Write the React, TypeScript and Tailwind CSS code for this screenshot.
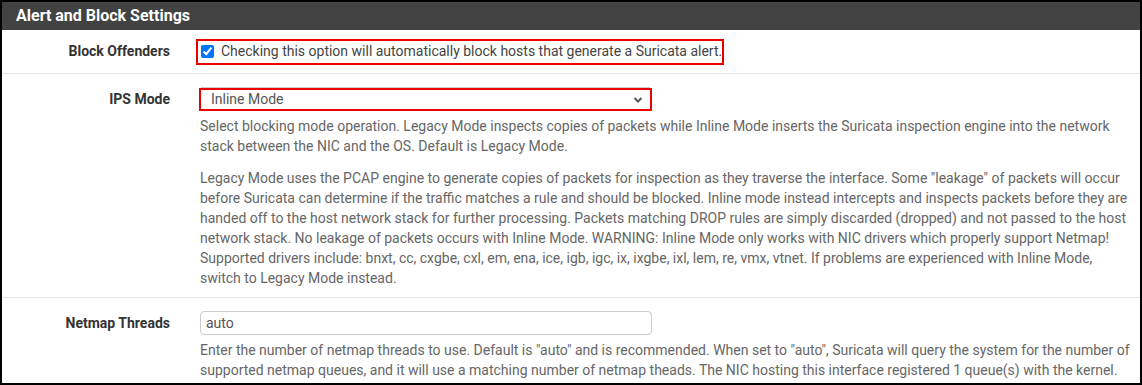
import React from "react";

export default function App() {
  return (
    <div className="w-[1142px] h-[385px] bg-black p-[2px] font-['Roboto',sans-serif]">
      <div className="bg-white h-full overflow-hidden">
        <div className="h-[28px] bg-[#424242] text-white font-bold text-[16px] pl-[14px] flex items-center">
          Alert and Block Settings
        </div>
        {/* Row 1 */}
        <div className="flex border-b border-[#e3e3e3] h-[44px] items-center">
          <div className="w-[168px] text-right text-[14px] font-bold text-[#333]">Block Offenders</div>
          <div className="pl-[26px]">
            <div className="border-2 border-[#ee0000] h-[26px] w-[528px] flex items-center pl-[3px] whitespace-nowrap">
              <input type="checkbox" defaultChecked className="w-[13px] h-[13px] accent-[#0075ff] m-0 shrink-0" />
              <span className="ml-[7px] text-[14px] text-[#444]">
                Checking this option will automatically block hosts that generate a Suricata alert.
              </span>
            </div>
          </div>
        </div>
        {/* Row 2 */}
        <div className="flex border-b border-[#e3e3e3] pt-[14px] pb-[9px]">
          <div className="w-[168px] text-right text-[14px] font-bold text-[#333] pt-[1px]">IPS Mode</div>
          <div className="pl-[29px] flex-1 pr-[10px]">
            <div className="border-2 border-[#ee0000] h-[23px] w-[453px] flex items-center justify-between pl-[10px] pr-[7px] relative">
              <div className="absolute -top-[3px] left-0 right-0 h-[1px] bg-[#ccc]" />
              <span className="text-[14px] text-[#555]">Inline Mode</span>
              <svg width="10" height="8" viewBox="0 0 10 8">
                <path d="M1.5 2 L5 5.5 L8.5 2" stroke="#555" strokeWidth="2" fill="none" />
              </svg>
            </div>
            <div className="text-[14px] leading-[20px] text-[#666] pt-[5px] pl-[1px]">
              <p>
                Select blocking mode operation. Legacy Mode inspects copies of packets while Inline Mode inserts the Suricata inspection engine into the network stack between the NIC and the OS. Default is Legacy Mode.
              </p>
              <p className="mt-[12px]">
                Legacy Mode uses the PCAP engine to generate copies of packets for inspection as they traverse the interface. Some "leakage" of packets will occur before Suricata can determine if the traffic matches a rule and should be blocked. Inline mode instead intercepts and inspects packets before they are handed off to the host network stack for further processing. Packets matching DROP rules are simply discarded (dropped) and not passed to the host network stack. No leakage of packets occurs with Inline Mode. WARNING: Inline Mode only works with NIC drivers which properly support Netmap! Supported drivers include: bnxt, cc, cxgbe, cxl, em, ena, ice, igb, igc, ix, ixgbe, ixl, lem, re, vmx, vtnet. If problems are experienced with Inline Mode, switch to Legacy Mode instead.
              </p>
            </div>
          </div>
        </div>
        {/* Row 3 */}
        <div className="flex pt-[13px]">
          <div className="w-[168px] text-right text-[14px] font-bold text-[#333] pt-[2px]">Netmap Threads</div>
          <div className="pl-[30px] flex-1 pr-[10px]">
            <div className="border border-[#ccc] rounded-[4px] h-[24px] w-[452px] flex items-center pl-[5px] text-[14px] text-[#555]">
              auto
            </div>
            <div className="text-[14px] leading-[20px] text-[#666] pt-[5px]">
              Enter the number of netmap threads to use. Default is "auto" and is recommended. When set to "auto", Suricata will query the system for the number of supported netmap queues, and it will use a matching number of netmap theads. The NIC hosting this interface registered 1 queue(s) with the kernel.
            </div>
          </div>
        </div>
      </div>
    </div>
  );
}
